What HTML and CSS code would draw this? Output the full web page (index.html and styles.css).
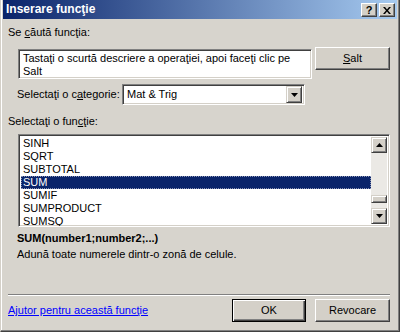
FILE: index.html
```html
<!DOCTYPE html>
<html lang="ro">
<head>
  <meta charset="UTF-8" />
  <title>Inserare funcţie</title>
  <link rel="stylesheet" href="styles.css">
</head>
<body>
  <div class="window">
    <div class="titlebar">
      <span class="title">Inserare funcţie</span>
      <div class="title-btns">
        <span class="tbtn">?</span>
        <span class="tbtn close">
          <svg width="8" height="7" viewBox="0 0 8 7"><path d="M0 0h2l2 2.5 2-2.5h2l-3 3.5 3 3.5h-2l-2-2.5-2 2.5h-2l3-3.5z" fill="#000"/></svg>
        </span>
      </div>
    </div>

    <div class="content">
      <div class="label">Se <u>c</u>ăută funcţia:</div>

      <div class="search-row">
        <div class="field textbox">Tastaţi o scurtă descriere a operaţiei, apoi faceţi clic pe Salt</div>
        <button class="btn"><u>S</u>alt</button>
      </div>

      <div class="cat-row">
        <span class="cat-label">Selectaţi o c<u>a</u>tegorie:</span>
        <div class="field select">
          <span class="select-value">Mat &amp; Trig</span>
          <span class="drop">
            <svg width="7" height="4" viewBox="0 0 7 4"><path d="M0 0h7l-3.5 4z" fill="#000"/></svg>
          </span>
        </div>
      </div>

      <div class="label fn-label">Selectaţi o fun<u>c</u>ţie:</div>

      <div class="field list">
        <ul class="items">
          <li>SINH</li>
          <li>SQRT</li>
          <li>SUBTOTAL</li>
          <li class="selected">SUM</li>
          <li>SUMIF</li>
          <li>SUMPRODUCT</li>
          <li>SUMSQ</li>
        </ul>
        <div class="scrollbar">
          <span class="sbtn">
            <svg width="7" height="4" viewBox="0 0 7 4"><path d="M0 4h7l-3.5-4z" fill="#000"/></svg>
          </span>
          <div class="track"><span class="thumb"></span></div>
          <span class="sbtn">
            <svg width="7" height="4" viewBox="0 0 7 4"><path d="M0 0h7l-3.5 4z" fill="#000"/></svg>
          </span>
        </div>
      </div>

      <div class="syntax">SUM(number1;number2;...)</div>
      <div class="desc">Adună toate numerele dintr-o zonă de celule.</div>

      <div class="sep"></div>

      <div class="footer">
        <a href="#" class="help">Ajutor pentru această funcţie</a>
        <div class="actions">
          <button class="btn default">OK</button>
          <button class="btn">Revocare</button>
        </div>
      </div>
    </div>
  </div>
</body>
</html>
```

FILE: styles.css
```css
* {
  box-sizing: border-box;
}

body {
  margin: 0;
  font-family: "Liberation Sans", Arial, sans-serif;
  font-size: 11px;
  line-height: 13px;
  color: #000;
  background: #d4d0c8;
}

.window {
  width: 400px;
  height: 332px;
  background: #d7d4cd;
  border-style: solid;
  border-width: 0 1px 1px 1px;
  border-color: #404040 #404040 #404040 #d4d0c8;
  box-shadow: inset -1px -1px #808080, inset 1px 0 #fff;
  padding: 0 2px 2px 2px;
}

.titlebar {
  height: 19px;
  background: linear-gradient(to right, #0a246a, #a6caf0);
  display: flex;
  align-items: center;
  justify-content: space-between;
  padding: 0 2px 0 3px;
}

.title {
  color: #fff;
  font-weight: bold;
  font-size: 12px;
}

.title-btns {
  display: flex;
  gap: 2px;
  margin-top: 1px;
}

.tbtn {
  width: 16px;
  height: 14px;
  background: #d4d0c8;
  border: 1px solid;
  border-color: #fff #404040 #404040 #fff;
  box-shadow: inset -1px -1px #808080;
  display: flex;
  align-items: center;
  justify-content: center;
  font-weight: bold;
  font-size: 11px;
  line-height: 11px;
}

.content {
  padding: 7px 7px 0 5px;
}

.label {
  height: 13px;
}

.field {
  background: #fff;
  border: 1px solid;
  border-color: #808080 #fff #fff #808080;
  box-shadow: inset 1px 1px #404040, inset -1px -1px #d4d0c8;
}

.search-row {
  display: flex;
  align-items: flex-start;
  gap: 3px;
  margin: 8px 0 0 10px;
}

.textbox {
  width: 294px;
  height: 30px;
  margin-top: 2px;
  padding: 2px 4px 0 4px;
  line-height: 13px;
  overflow: hidden;
}

.btn {
  font: inherit;
  color: #000;
  width: 75px;
  height: 23px;
  padding: 0;
  background: #d4d0c8;
  border: 1px solid;
  border-color: #fff #404040 #404040 #fff;
  box-shadow: inset -1px -1px #808080;
}

.btn.default {
  width: 74px;
  border-color: #000;
  box-shadow: inset 1px 1px #fff, inset -1px -1px #404040, inset -2px -2px #808080;
}

.cat-row {
  display: flex;
  align-items: center;
  margin: 5px 0 0 9px;
}

.cat-label {
  width: 105px;
}

.select {
  width: 183px;
  height: 21px;
  display: flex;
  align-items: center;
  justify-content: space-between;
  padding: 2px;
}

.select-value {
  padding-left: 2px;
}

.drop,
.sbtn {
  width: 16px;
  height: 17px;
  background: #d4d0c8;
  border: 1px solid;
  border-color: #d4d0c8 #404040 #404040 #d4d0c8;
  box-shadow: inset 1px 1px #fff, inset -1px -1px #808080;
  display: flex;
  align-items: center;
  justify-content: center;
}

.fn-label {
  margin-top: 10px;
}

.list {
  display: flex;
  height: 93px;
  margin: 6px 0 0 10px;
  padding: 2px;
  overflow: hidden;
}

.items {
  flex: 1;
  list-style: none;
  margin: 0;
  padding: 0;
}

.items li {
  height: 13px;
  padding-left: 2px;
}

.items li.selected {
  background: #0a246a;
  color: #fff;
  outline: 1px dotted #8a93b4;
  outline-offset: -1px;
}

.scrollbar {
  width: 16px;
  display: flex;
  flex-direction: column;
}

.sbtn {
  height: 16px;
}

.track {
  flex: 1;
  background: #ebe9e5;
}

.thumb {
  display: block;
  height: 8px;
  margin-top: 42px;
  background: #d4d0c8;
  border: 1px solid;
  border-color: #d4d0c8 #404040 #404040 #d4d0c8;
  box-shadow: inset 1px 1px #fff, inset -1px -1px #808080;
}

.syntax {
  font-weight: bold;
  margin: 5px 0 0 9px;
}

.desc {
  margin: 3px 0 0 9px;
}

.sep {
  height: 2px;
  margin-top: 33px;
  border-top: 1px solid #808080;
  border-bottom: 1px solid #fff;
}

.footer {
  display: flex;
  align-items: center;
  justify-content: space-between;
  margin-top: 3px;
}

.help {
  color: #0000ff;
}

.actions {
  display: flex;
  gap: 9px;
}
```
